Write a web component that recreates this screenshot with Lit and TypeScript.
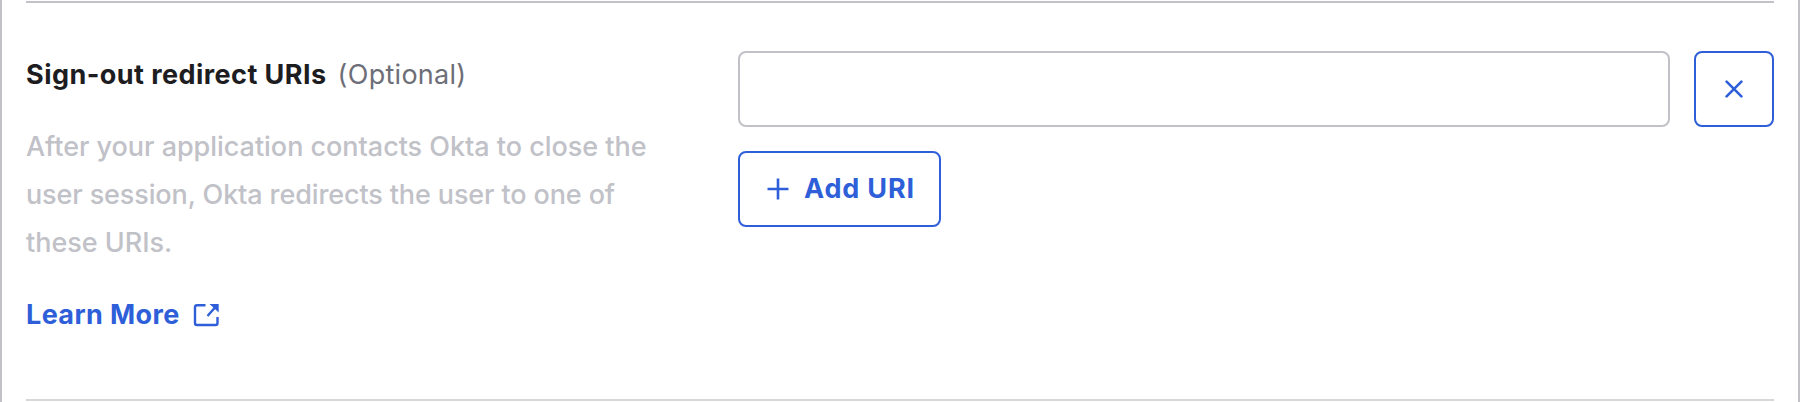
import { LitElement, html, css } from "lit";
import { customElement } from "lit/decorators.js";

@customElement("app-root")
export class AppRoot extends LitElement {
  static styles = css`
    :host {
      display: block;
      font-family: Inter, "Liberation Sans", sans-serif;
      font-size: 27px;
      color: #1d1d21;
    }
    * { box-sizing: border-box; }
    .panel {
      height: 402px;
      padding: 1px 24px;
      border: solid #c1c1c8;
      border-width: 0 2px;
      background: #fff;
      overflow: hidden;
    }
    .row {
      display: grid;
      grid-template-columns: 688px 1fr;
      column-gap: 24px;
      height: 400px;
      padding-top: 48px;
      border-top: 2px solid #c1c1c8;
      border-bottom: 2px solid #d7d7dc;
    }
    .info { white-space: nowrap; }
    .heading { display: flex; line-height: 48px; height: 72px; gap: 11px; }
    .title { font-weight: 700; letter-spacing: 0.45px; }
    .optional { color: #6e6e78; letter-spacing: 0.28px; }
    .hint { margin: 0; line-height: 48px; height: 144px; color: #c1c1c8; font-weight: 500; }
    .line { display: block; letter-spacing: -0.03px; }
    .tight { letter-spacing: -0.12px; }
    .learn {
      display: flex;
      align-items: center;
      gap: 13px;
      margin-top: 24px;
      line-height: 48px;
      font-weight: 700;
      letter-spacing: 0.38px;
      color: #2e5fd9;
      text-decoration: none;
    }
    svg { display: block; flex: none; fill: none; stroke: currentColor; }
    .fields { display: flex; flex-direction: column; gap: 24px; align-items: flex-start; }
    .entry { display: flex; gap: 24px; width: 100%; }
    .input {
      flex: 1;
      min-width: 0;
      height: 76px;
      border: 2px solid #c1c1c8;
      border-radius: 8px;
      background: #fff;
      font: inherit;
      padding: 0 20px;
      outline: none;
    }
    .btn {
      display: flex;
      align-items: center;
      height: 76px;
      padding: 0;
      border: 2px solid #2e5fd9;
      border-radius: 8px;
      background: #fff;
      color: #2e5fd9;
      font: inherit;
      font-weight: 700;
    }
    .remove { width: 80px; justify-content: center; }
    .add { width: 203px; padding-left: 27px; gap: 15px; white-space: nowrap; letter-spacing: 0.85px; }
    .add .label { padding-bottom: 2px; }
  `;

  render() {
    return html`
      <div class="panel">
        <section class="row">
          <div class="info">
            <div class="heading">
              <span class="title">Sign-out redirect URIs</span>
              <span class="optional">(Optional)</span>
            </div>
            <p class="hint">
              <span class="line">After your application contacts Okta to close the</span>
              <span class="line tight">user session, Okta redirects the user to one of</span>
              <span class="line">these URIs.</span>
            </p>
            <a class="learn">
              <span class="label">Learn More</span>
              <svg width="26" height="24" viewBox="0 0 26 24" stroke-width="2.4">
                <path d="M12.5 2.2H4Q2 2.2 2 4.2V20Q2 22 4 22H22.5Q24.5 22 24.5 20V14" />
                <path d="M14.5 13L22 4.5" />
                <path d="M16.5 1H25.7V9.5Z" fill="currentColor" stroke="none" />
              </svg>
            </a>
          </div>
          <div class="fields">
            <div class="entry">
              <input class="input" type="text" aria-label="Sign-out redirect URI" />
              <button class="btn remove" aria-label="Remove">
                <svg width="18" height="18" viewBox="0 0 18 18" stroke-width="2.6" stroke-linecap="round">
                  <path d="M1.6 1.6L16.4 16.4M16.4 1.6L1.6 16.4" />
                </svg>
              </button>
            </div>
            <button class="btn add">
              <svg width="22" height="22" viewBox="0 0 22 22" stroke-width="2.6">
                <path d="M11 0.5V21.5M0.5 11H21.5" />
              </svg>
              <span class="label">Add URI</span>
            </button>
          </div>
        </section>
      </div>
    `;
  }
}
